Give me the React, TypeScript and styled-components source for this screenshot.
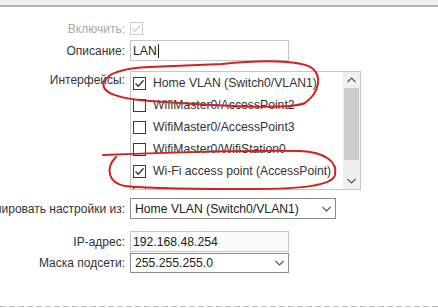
import React from "react";
import styled, { createGlobalStyle } from "styled-components";

const Global = createGlobalStyle`
  html, body { margin: 0; padding: 0; background: #fff; }
  body {
    font-family: "Liberation Sans", Arial, sans-serif;
    font-size: 12px;
    color: #333;
    overflow: hidden;
  }
`;

const Page = styled.div`
  position: relative;
  width: 438px;
  height: 308px;
  overflow: hidden;
  background: #fff;
`;

const TopBar = styled.div`
  height: 5px;
  background: #efefef;
  border-bottom: 2px solid #b4b4b4;
`;

const Form = styled.div`
  display: flex;
  flex-direction: column;
`;

const Row = styled.div<{ $mt: number; $h: number }>`
  display: flex;
  align-items: center;
  gap: 5px;
  margin-top: ${(p) => p.$mt}px;
  height: ${(p) => p.$h}px;
`;

const Label = styled.div<{ $disabled?: boolean; $top?: boolean }>`
  width: 125px;
  flex-shrink: 0;
  display: flex;
  justify-content: flex-end;
  white-space: nowrap;
  line-height: 14px;
  color: ${(p) => (p.$disabled ? "#a9a9a9" : "#333")};
  align-self: ${(p) => (p.$top ? "flex-start" : "center")};
  padding-top: ${(p) => (p.$top ? "2px" : "0")};
`;

const Box = styled.span<{ $disabled?: boolean }>`
  box-sizing: border-box;
  width: 13px;
  height: 13px;
  flex-shrink: 0;
  border: 1px solid ${(p) => (p.$disabled ? "#cfcfcf" : "#3a3a3a")};
  background: #fff;
  display: flex;
  align-items: center;
  justify-content: center;
`;

const Check = ({ checked, disabled }: { checked?: boolean; disabled?: boolean }) => (
  <Box $disabled={disabled}>
    {checked && (
      <svg width="11" height="11" viewBox="0 0 11 11">
        <polyline
          points="1.5,5.5 4.2,8.3 9.5,2.2"
          fill="none"
          stroke={disabled ? "#cfcfcf" : "#333"}
          strokeWidth="1.3"
        />
      </svg>
    )}
  </Box>
);

const TextInput = styled.div<{ $w: number; $muted?: boolean }>`
  box-sizing: border-box;
  width: ${(p) => p.$w}px;
  height: 100%;
  border: 1px solid #c6c6c6;
  background: ${(p) => (p.$muted ? "#fbfbfb" : "#fff")};
  padding-left: 2px;
  display: flex;
  align-items: center;
  color: #222;
  font-size: 12.2px;
`;

const Caret = styled.span`
  display: inline-block;
  width: 1px;
  height: 14px;
  background: #222;
  margin-left: 1px;
`;

const Select = styled.div<{ $w: number }>`
  box-sizing: border-box;
  width: ${(p) => p.$w}px;
  height: 100%;
  border: 1px solid #8c8c8c;
  background: #fff;
  padding: 0 4px 0 4px;
  display: flex;
  align-items: center;
  justify-content: space-between;
  color: #222;
  font-size: 12.2px;
`;

const Chevron = ({ up }: { up?: boolean }) => (
  <svg width="9" height="6" viewBox="0 0 9 6">
    <polyline
      points={up ? "0.5,5 4.5,1 8.5,5" : "0.5,1 4.5,5 8.5,1"}
      fill="none"
      stroke="#555"
      strokeWidth="1.1"
    />
  </svg>
);

const ListBox = styled.div`
  box-sizing: border-box;
  width: 231px;
  height: 119px;
  border: 1px solid #c6c6c6;
  display: flex;
  background: #fff;
`;

const ListItems = styled.div`
  flex: 1;
  overflow: hidden;
  display: flex;
  flex-direction: column;
`;

const ListItem = styled.div`
  height: 22px;
  flex-shrink: 0;
  display: flex;
  align-items: center;
  gap: 7px;
  padding-left: 2px;
  white-space: nowrap;
  font-size: 12.2px;
  color: #333;
`;

const Scrollbar = styled.div`
  width: 17px;
  display: flex;
  flex-direction: column;
  background: #f0f0f0;
`;

const ScrollBtn = styled.div`
  height: 16px;
  display: flex;
  align-items: center;
  justify-content: center;
  background: #f0f0f0;
`;

const Thumb = styled.div`
  height: 72px;
  margin: 0 1px;
  background: #cdcdcd;
`;

const Track = styled.div`
  flex: 1;
`;

const Divider = styled.div`
  position: absolute;
  left: 0;
  right: 0;
  top: 306px;
  height: 1px;
  background: repeating-linear-gradient(to right, #bdbdbd 0 6px, transparent 6px 9px);
`;

const Overlay = styled.svg`
  position: absolute;
  left: 0;
  top: 0;
  pointer-events: none;
`;

const items = [
  { label: "Home VLAN (Switch0/VLAN1)", checked: true },
  { label: "WifiMaster0/AccessPoint2", checked: false },
  { label: "WifiMaster0/AccessPoint3", checked: false },
  { label: "WifiMaster0/WifiStation0", checked: false },
  { label: "Wi-Fi access point (AccessPoint)", checked: true },
  { label: "Guest Wi-Fi (GuestWiFi)", checked: false },
];

export default function App() {
  return (
    <Page>
      <Global />
      <TopBar />
      <Form>
        <Row $mt={14} $h={15}>
          <Label $disabled>Включить:</Label>
          <Check checked disabled />
        </Row>
        <Row $mt={4} $h={21}>
          <Label>Описание:</Label>
          <TextInput $w={159}>
            LAN
            <Caret />
          </TextInput>
        </Row>
        <Row $mt={10} $h={119}>
          <Label $top>Интерфейсы:</Label>
          <ListBox>
            <ListItems>
              {items.map((it) => (
                <ListItem key={it.label}>
                  <Check checked={it.checked} />
                  <span>{it.label}</span>
                </ListItem>
              ))}
            </ListItems>
            <Scrollbar>
              <ScrollBtn>
                <Chevron up />
              </ScrollBtn>
              <Thumb />
              <Track />
              <ScrollBtn>
                <Chevron />
              </ScrollBtn>
            </Scrollbar>
          </ListBox>
        </Row>
        <Row $mt={8} $h={21}>
          <Label>Копировать настройки из:</Label>
          <Select $w={206}>
            <span>Home VLAN (Switch0/VLAN1)</span>
            <Chevron />
          </Select>
        </Row>
        <Row $mt={12} $h={21}>
          <Label>IP-адрес:</Label>
          <TextInput $w={159} $muted>
            192.168.48.254
          </TextInput>
        </Row>
        <Row $mt={1} $h={20}>
          <Label>Маска подсети:</Label>
          <Select $w={159}>
            <span>255.255.255.0</span>
            <Chevron />
          </Select>
        </Row>
      </Form>
      <Divider />
      <Overlay width="438" height="308" viewBox="0 0 438 308">
        <path
          d="M 222 64 C 260 60, 300 60, 312 68 C 322 76, 320 92, 305 103 C 290 110, 220 106, 150 101 C 120 99, 100 93, 104 82 C 108 72, 125 68, 150 67 L 222 64"
          fill="none"
          stroke="#d61f1f"
          strokeWidth="2"
          strokeLinecap="round"
        />
        <path
          d="M 103 155 C 150 153, 250 150, 300 151 C 325 152, 338 162, 335 175 C 332 186, 300 189, 250 189 C 200 189, 150 189, 125 186 C 108 183, 105 168, 116 157"
          fill="none"
          stroke="#d61f1f"
          strokeWidth="2"
          strokeLinecap="round"
        />
      </Overlay>
    </Page>
  );
}
